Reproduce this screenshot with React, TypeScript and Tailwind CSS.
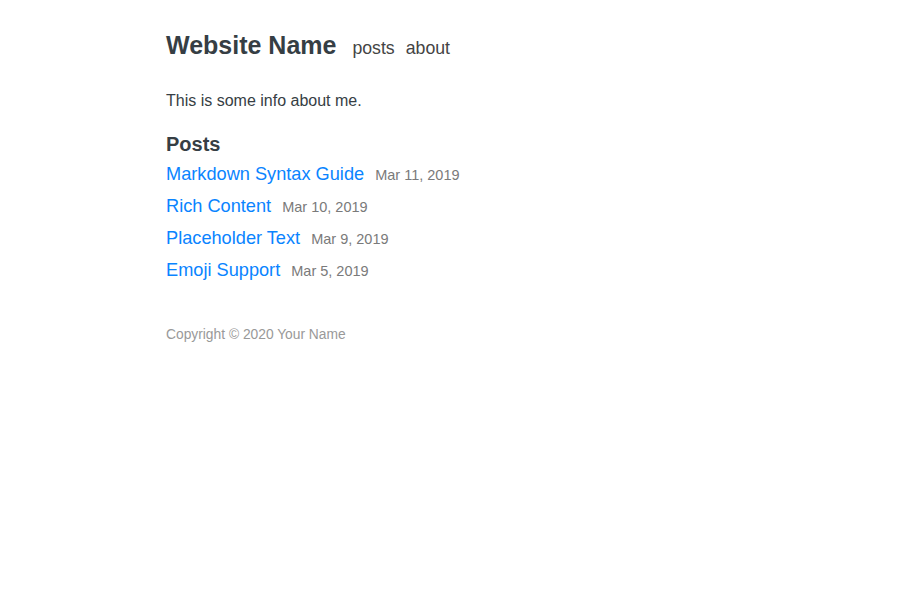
import React from "react";

const posts = [
  { title: "Markdown Syntax Guide", date: "Mar 11, 2019" },
  { title: "Rich Content", date: "Mar 10, 2019" },
  { title: "Placeholder Text", date: "Mar 9, 2019" },
  { title: "Emoji Support", date: "Mar 5, 2019" },
];

export default function App() {
  return (
    <div className="min-h-screen bg-white text-[#363e44]" style={{ fontFamily: '"Liberation Sans", Arial, sans-serif' }}>
      <div className="mx-auto w-[568px] pt-[29px]">
        <header className="flex items-baseline">
          <span className="text-[25px] font-bold leading-[32px]">Website Name</span>
          <nav className="ml-[16px] flex gap-[11px] text-[17.7px] text-[#444]">
            <span>posts</span>
            <span>about</span>
          </nav>
        </header>
        <p className="mt-[28px] text-[16px] leading-[22px]">This is some info about me.</p>
        <h2 className="mt-[20px] text-[20px] font-bold leading-[24px]">Posts</h2>
        <ul className="mt-[6px] flex flex-col">
          {posts.map((p) => (
            <li key={p.title} className="flex h-[32px] items-baseline leading-[24px]">
              <a className="text-[18.2px] text-[#0a84ff]">{p.title}</a>
              <span className="ml-[11px] text-[14.5px] text-[#7a7a7a]">{p.date}</span>
            </li>
          ))}
        </ul>
        <footer className="mt-[35px] text-[13.8px] text-[#999]">Copyright © 2020 Your Name</footer>
      </div>
    </div>
  );
}
